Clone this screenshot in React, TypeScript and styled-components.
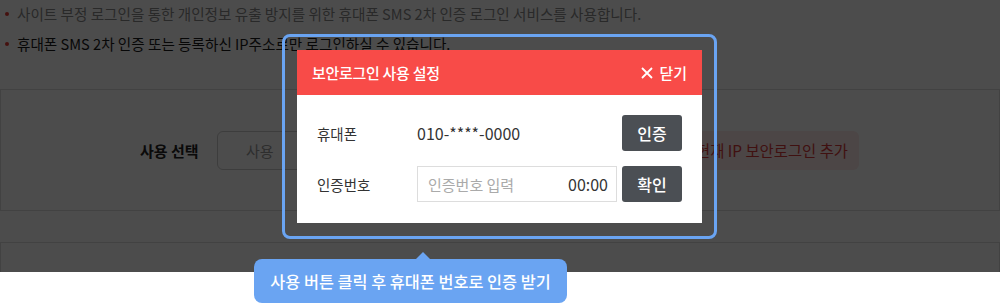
import styled, { createGlobalStyle } from "styled-components";

const GlobalStyle = createGlobalStyle`
  html, body {
    margin: 0;
    padding: 0;
    background: #ffffff;
    font-family: "Noto Sans CJK KR", "Noto Sans", sans-serif;
    color: #333;
  }
  * {
    box-sizing: border-box;
  }
`;

const Screen = styled.div`
  position: relative;
  width: 1000px;
  height: 304px;
  overflow: hidden;
`;

const Page = styled.div`
  position: relative;
  height: 272px;
  overflow: hidden;
`;

const NoticeList = styled.ul`
  list-style: none;
  margin: -1px 0 0;
  padding: 0 0 0 17px;
`;

const NoticeItem = styled.li<{ $strong?: boolean }>`
  position: relative;
  font-size: 14.6px;
  line-height: 30px;
  white-space: nowrap;
  color: ${({ $strong }) => ($strong ? "#1a1a1a" : "#8a8a8a")};

  &::before {
    content: "";
    position: absolute;
    left: -12px;
    top: 13px;
    width: 4px;
    height: 4px;
    border-radius: 50%;
    background: #e53935;
  }
`;

const SettingBox = styled.section`
  margin-top: 30px;
  height: 122px;
  border: 1px solid #dddddd;
  display: flex;
  align-items: center;
  padding-left: 139px;
`;

const NextBox = styled.section`
  margin-top: 31px;
  height: 60px;
  border: 1px solid #dddddd;
`;

const FieldLabel = styled.span`
  font-size: 15px;
  font-weight: 700;
  color: #222;
  width: 77px;
`;

const SelectBox = styled.div`
  width: 300px;
  height: 39px;
  border: 1px solid #cccccc;
  border-radius: 6px;
  display: flex;
  align-items: center;
  padding-left: 28px;
  font-size: 15px;
  color: #999;
`;

const AddIpButton = styled.button`
  margin-left: 158px;
  height: 39px;
  width: 184px;
  border: none;
  border-radius: 6px;
  background: #fde9e9;
  color: #d83a3a;
  font-family: inherit;
  font-size: 15.4px;
  padding: 0 0 0 21px;
  text-align: left;
  white-space: nowrap;
`;

const Dim = styled.div`
  position: absolute;
  inset: 0;
  background: rgba(0, 0, 0, 0.7);
`;

const Modal = styled.div`
  position: absolute;
  left: 297px;
  top: 50px;
  width: 405px;
  background: #ffffff;
`;

const Highlight = styled.div`
  position: absolute;
  inset: -16px -15px -16px -15px;
  border: 3px solid #6aa4f2;
  border-radius: 8px;
  pointer-events: none;
`;

const ModalHeader = styled.header`
  height: 45px;
  background: #f84b48;
  color: #fff;
  display: flex;
  align-items: center;
  justify-content: space-between;
  padding: 0 15px 0 15px;
`;

const ModalTitle = styled.h2`
  margin: 0;
  font-size: 15px;
  font-weight: 500;
  letter-spacing: -0.3px;
`;

const CloseButton = styled.button`
  display: flex;
  align-items: center;
  gap: 6px;
  background: none;
  border: none;
  padding: 0;
  color: #fff;
  font-family: inherit;
  font-size: 15px;
  font-weight: 500;
`;

const ModalBody = styled.div`
  padding: 20px 20px 21px;
  display: flex;
  flex-direction: column;
  gap: 15px;
`;

const Row = styled.div`
  display: flex;
  align-items: center;
  height: 36px;
`;

const RowLabel = styled.span`
  width: 100px;
  font-size: 14.5px;
  color: #333;
`;

const RowValue = styled.span`
  flex: 1;
  font-size: 16px;
  color: #333;
`;

const CodeInput = styled.div`
  width: 200px;
  height: 36px;
  border: 1px solid #dddddd;
  display: flex;
  align-items: center;
  justify-content: space-between;
  padding: 0 8px 0 10px;
  margin-right: 5px;
`;

const Placeholder = styled.span`
  font-size: 15px;
  color: #aaaaaa;
`;

const Timer = styled.span`
  font-size: 16px;
  color: #333;
`;

const DarkButton = styled.button`
  margin-left: auto;
  width: 60px;
  height: 36px;
  border: none;
  border-radius: 3px;
  background: #4b4f54;
  color: #fff;
  font-family: inherit;
  font-size: 16px;
  font-weight: 500;
`;

const Tooltip = styled.div`
  position: absolute;
  left: 254px;
  top: 259px;
  width: 313px;
  height: 44px;
  border-radius: 8px;
  background: #6aa4f2;
  color: #fff;
  font-size: 16.3px;
  font-weight: 500;
  white-space: nowrap;
  display: flex;
  align-items: center;
  justify-content: center;

  &::before {
    content: "";
    position: absolute;
    top: -7px;
    left: 162px;
    border-left: 7px solid transparent;
    border-right: 7px solid transparent;
    border-bottom: 7px solid #6aa4f2;
  }
`;

const CloseIcon = () => (
  <svg width="12" height="12" viewBox="0 0 12 12" aria-hidden="true">
    <path d="M1 1 L11 11 M11 1 L1 11" stroke="#fff" strokeWidth="1.8" fill="none" />
  </svg>
);

export default function App() {
  return (
    <>
      <GlobalStyle />
      <Screen>
        <Page>
          <NoticeList>
            <NoticeItem>
              사이트 부정 로그인을 통한 개인정보 유출 방지를 위한 휴대폰 SMS 2차 인증 로그인 서비스를 사용합니다.
            </NoticeItem>
            <NoticeItem $strong>휴대폰 SMS 2차 인증 또는 등록하신 IP주소로만 로그인하실 수 있습니다.</NoticeItem>
          </NoticeList>
          <SettingBox>
            <FieldLabel>사용 선택</FieldLabel>
            <SelectBox>사용</SelectBox>
            <AddIpButton>현재 IP 보안로그인 추가</AddIpButton>
          </SettingBox>
          <NextBox />
          <Dim />
        </Page>

        <Modal>
          <Highlight />
          <ModalHeader>
            <ModalTitle>보안로그인 사용 설정</ModalTitle>
            <CloseButton>
              <CloseIcon />
              닫기
            </CloseButton>
          </ModalHeader>
          <ModalBody>
            <Row>
              <RowLabel>휴대폰</RowLabel>
              <RowValue>010-****-0000</RowValue>
              <DarkButton>인증</DarkButton>
            </Row>
            <Row>
              <RowLabel>인증번호</RowLabel>
              <CodeInput>
                <Placeholder>인증번호 입력</Placeholder>
                <Timer>00:00</Timer>
              </CodeInput>
              <DarkButton>확인</DarkButton>
            </Row>
          </ModalBody>
        </Modal>

        <Tooltip>사용 버튼 클릭 후 휴대폰 번호로 인증 받기</Tooltip>
      </Screen>
    </>
  );
}
